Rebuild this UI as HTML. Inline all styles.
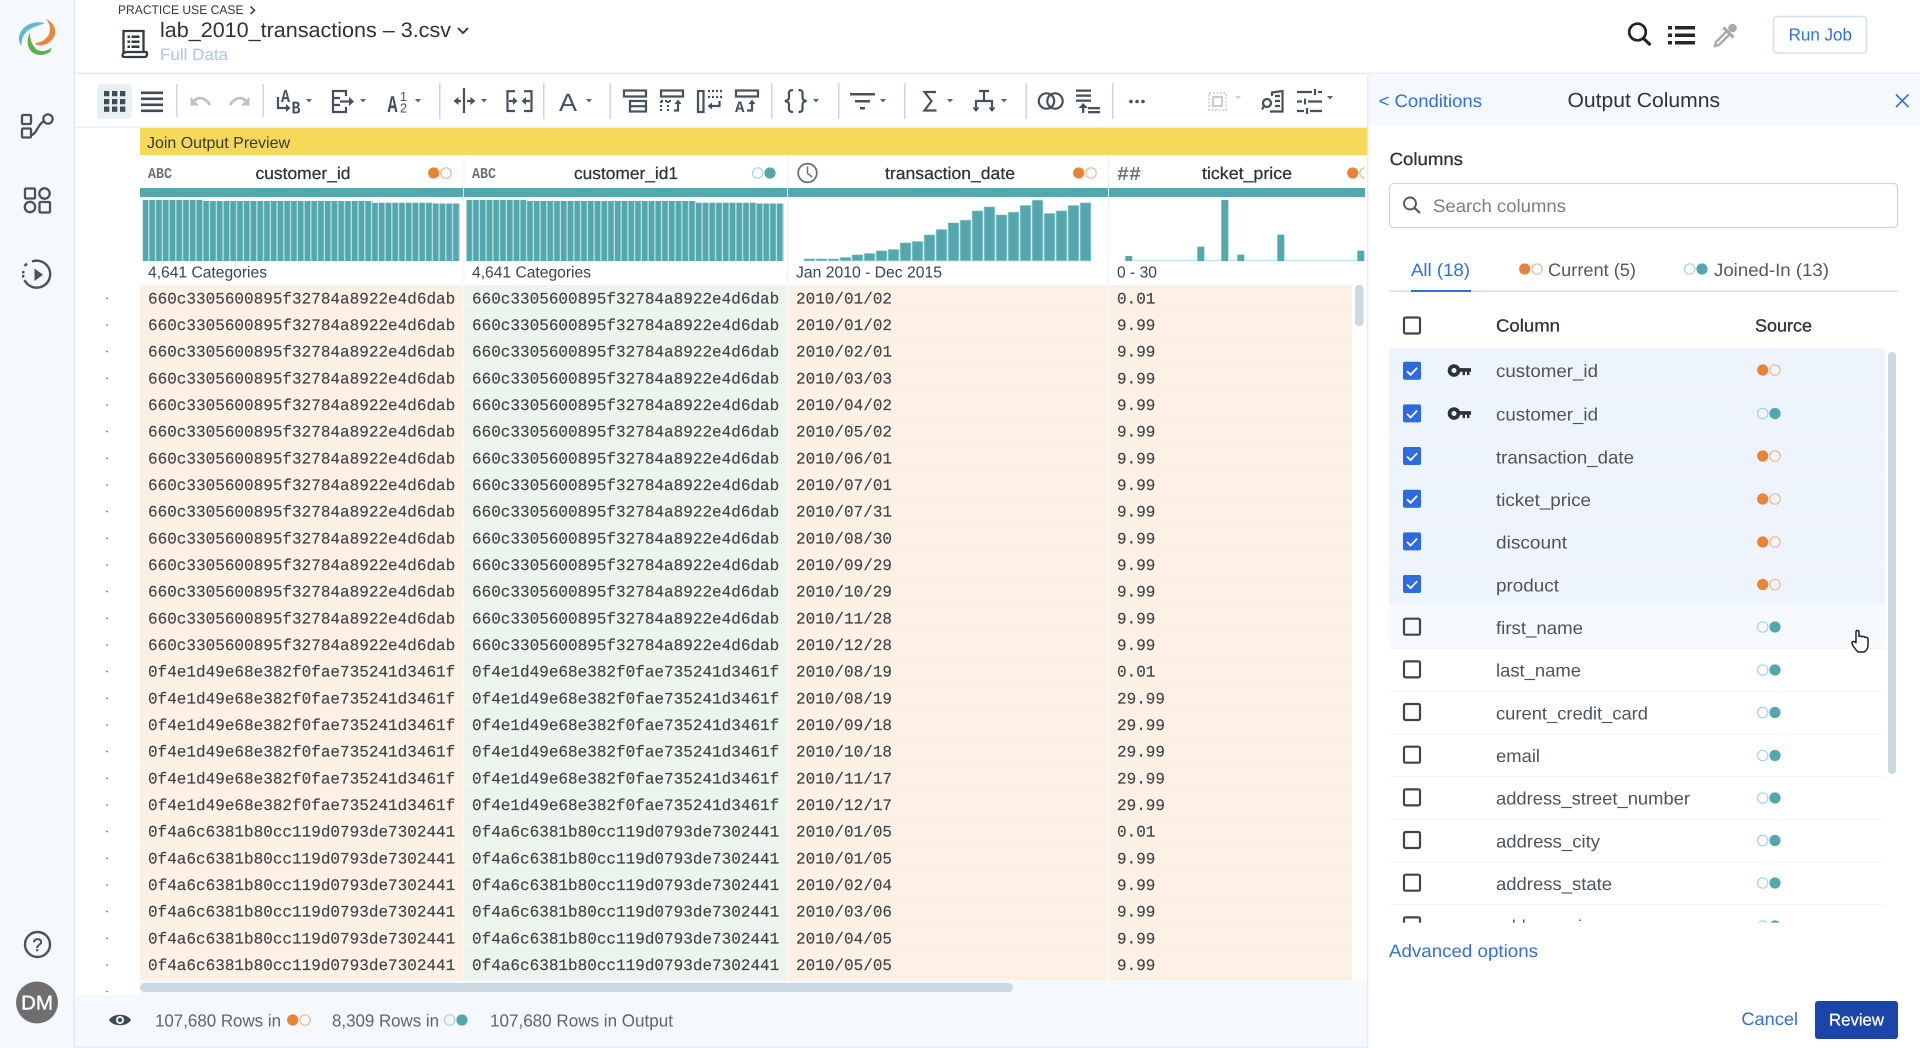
<!DOCTYPE html>
<html lang="en"><head><meta charset="utf-8"><title>Output Columns</title>
<style>
html,body{margin:0;padding:0;background:#fff;width:1920px;height:1048px;overflow:hidden}
svg{display:block;font-family:"Liberation Sans",sans-serif;text-rendering:geometricPrecision}
.m{font-family:"Liberation Mono",monospace;font-size:16px;fill:#3e4347;stroke:#3e4347;stroke-width:.15}
.hd{font-size:17px;fill:#2f3336;stroke:#2f3336;stroke-width:.25}
.rw{font-size:18px;fill:#4d5358}
.bl{fill:#2f6fdf}
.ic{fill:none;stroke:#46525b;stroke-width:2.2}
.fi{fill:#46525b}
.car{fill:#5a646c}
</style></head><body>
<svg xmlns="http://www.w3.org/2000/svg" width="1920" height="1048" viewBox="0 0 1920 1048">
<defs>
<g id="o"><circle cx="5.7" cy="0" r="5.6" fill="#e8843a"/><circle cx="18" cy="0" r="5.2" fill="none" stroke="#f1b690" stroke-width="1.2"/></g>
<g id="t"><circle cx="5.7" cy="0" r="5.2" fill="none" stroke="#a3d5d8" stroke-width="1.2"/><circle cx="18" cy="0" r="5.6" fill="#53a7ad"/></g>
<g id="cb"><rect x="1404" y="-8" width="16" height="16" rx="1.5" fill="none" stroke="#404549" stroke-width="2.2"/></g>
<g id="cc"><rect x="1403" y="-9" width="18" height="18" rx="2" fill="#2c6ae0"/><path d="M1407 0.5l3.6 3.6l6.6-7" fill="none" stroke="#fff" stroke-width="1.8"/></g>
<g id="key"><circle cx="1454" cy="0" r="4.4" fill="none" stroke="#2e3236" stroke-width="3.8"/><path d="M1458 -2.4h13v3.6h-1.600v3.400h-2.400v-3.400h-2v3.400h-2.400v-3.400h-4.600z" fill="#2e3236"/></g>
<pattern id="pb" patternUnits="userSpaceOnUse" x="142.7" y="0" width="6.75" height="100"><rect width="6.75" height="100" fill="#bfe2e4"/><rect width="5.5" height="100" fill="#53a7ad"/></pattern>
<pattern id="po" patternUnits="userSpaceOnUse" x="0" y="285" width="100" height="26.67"><rect width="100" height="26.67" fill="#fdf1e6"/><rect y="26" width="100" height=".67" fill="#f8e8dc"/></pattern>
<pattern id="pg" patternUnits="userSpaceOnUse" x="0" y="285" width="100" height="26.67"><rect width="100" height="26.67" fill="#ebf5ee"/><rect y="26" width="100" height=".67" fill="#deeee4"/></pattern>
<path id="hist" fill="url(#pb)" d="M142.7 261V200H203.45V201H372.2V202.7H433V203.5H460V205V261Z"/>
</defs>

<rect width="1920" height="1048" fill="#fff"/>

<!-- sidebar -->
<rect x="0" y="0" width="73.5" height="1048" fill="#f5f9fe"/>
<rect x="73.5" y="0" width="1.5" height="1048" fill="#dfe9f2"/>
<path d="M45 23C33 20 21 26 19 37C18.6 41 19.5 43.500 21.500 46C21 38 25 31 32 28C36 26 40 25 45 23Z" fill="#5cb8d6"/>
<path d="M46 19C53 22 57 29 54.500 36C52 41 47 45 41 45.500C38 45.500 36 44.500 35 43C41 43 47 39 49 34C51 29 50 24 46 19Z" fill="#e9843c"/>
<path d="M30 33C26 40 27 49 33.500 53C38 56 45 55.500 50 52C51 50 51.500 49 51.500 47.500C46 52 40 52 36 49C32 45 30 40 30 33Z" fill="#5cb14b"/>
<g fill="none" stroke="#48535c" stroke-width="2.300">
<rect x="22" y="115" width="9" height="9" rx="1"/><circle cx="48" cy="119" r="4.600"/><rect x="22" y="128.500" width="9" height="9" rx="1"/><path d="M44 121C38 124 37 133 32 135"/>
<rect x="25" y="188.500" width="10" height="10" rx="1"/><circle cx="44.500" cy="193.500" r="5.200"/><circle cx="30" cy="207" r="5.200"/><rect x="39.500" y="202" width="10.500" height="10.500" rx="1"/>
<path d="M32 261.500A13.500 13.500 0 1 1 24.500 280" stroke-width="2.400"/><path d="M23.500 271A13.500 13.500 0 0 0 23.500 278" stroke-width="2.400" stroke-dasharray="2.500 1.500"/><path d="M27 263.500l-2.500 2.500" stroke-width="2.400"/>
</g>
<path d="M34.500 268.500L43 274.700L34.500 281Z" fill="#48535c"/>
<circle cx="37.500" cy="944.500" r="12.500" fill="none" stroke="#48535c" stroke-width="2.400"/>
<text x="32.500" y="951" font-size="18" fill="#48535c" stroke="#48535c" stroke-width=".5" textLength="10" lengthAdjust="spacingAndGlyphs">?</text>
<circle cx="37" cy="1002.500" r="21" fill="#6e6e6e"/>
<text x="21" y="1009.500" font-size="20" fill="#fff" stroke="#fff" stroke-width=".4" textLength="32" lengthAdjust="spacingAndGlyphs">DM</text>

<!-- top bar -->
<rect x="75" y="72.500" width="1845" height="1.800" fill="#e8edf4"/>
<text x="118" y="14" font-size="12.500" fill="#33383c" textLength="125.500" lengthAdjust="spacingAndGlyphs">PRACTICE USE CASE</text>
<path d="M250.500 6.500l4 3.800l-4 3.800" fill="none" stroke="#33383c" stroke-width="1.500"/>
<g fill="none" stroke="#333b40" stroke-width="2.300"><path d="M123.500 53V31h20v21"/><path d="M123.500 53C121.500 56 122.500 57 124.500 57H144.500C147.500 57 147.500 53 146.500 52H126.500C125.500 52 124.500 53 123.500 53Z"/></g>
<g fill="#333b40"><rect x="127.500" y="35.500" width="2.500" height="2.500"/><rect x="131.500" y="35.500" width="8" height="2.500"/><rect x="127.500" y="40.500" width="2.500" height="2.500"/><rect x="131.500" y="40.500" width="8" height="2.500"/><rect x="127.500" y="45.500" width="2.500" height="2.500"/><rect x="131.500" y="45.500" width="8" height="2.500"/></g>
<text x="160" y="37" font-size="21" fill="#2f3336" textLength="291" lengthAdjust="spacingAndGlyphs">lab_2010_transactions – 3.csv</text>
<path d="M458 28l5 5l5-5" fill="none" stroke="#33383c" stroke-width="1.900"/>
<text x="160" y="60" font-size="16.500" fill="#a9c6ee" textLength="68" lengthAdjust="spacingAndGlyphs">Full Data</text>

<circle cx="1637.500" cy="32" r="8.300" fill="none" stroke="#222" stroke-width="2.700"/><path d="M1643.500 38.500l7 6.500" stroke="#222" stroke-width="3.200"/>
<g fill="#25292c"><rect x="1668" y="26" width="4" height="3.500"/><rect x="1675" y="26" width="20" height="3.500"/><rect x="1668" y="33.500" width="4" height="3.500"/><rect x="1675" y="33.500" width="20" height="3.500"/><rect x="1668" y="41" width="4" height="3.500"/><rect x="1675" y="41" width="20" height="3.500"/></g>
<path d="M1727 31L1716 42L1715 46L1719 45L1730 34" fill="none" stroke="#a8a8a5" stroke-width="2.300"/><path d="M1723.500 27.500l10 10" stroke="#a8a8a5" stroke-width="3.200"/><circle cx="1732.500" cy="28" r="4.300" fill="#a8a8a5"/>
<rect x="1773.500" y="16.500" width="93" height="36.500" rx="3" fill="#fff" stroke="#d5e0ee" stroke-width="1.500"/>
<text x="1788.600" y="40.500" font-size="17.500" class="bl" textLength="63.400" lengthAdjust="spacingAndGlyphs">Run Job</text>

<!-- toolbar -->
<rect x="75" y="126.500" width="1292" height="1.500" fill="#e8edf4"/>
<g fill="#ccd6e0"><rect x="176" y="84" width="1.500" height="33"/><rect x="262.500" y="84" width="1.500" height="33"/><rect x="439" y="83" width="1.500" height="36"/><rect x="543" y="83" width="1.500" height="36"/><rect x="609.500" y="83" width="1.500" height="36"/><rect x="771" y="83" width="1.500" height="36"/><rect x="838" y="83" width="1.500" height="36"/><rect x="904" y="83" width="1.500" height="36"/><rect x="1025.500" y="83" width="1.500" height="36"/><rect x="1112" y="83" width="1.500" height="36"/></g>
<rect x="97" y="84" width="35" height="35" rx="4" fill="#e8f0f1"/>
<g fill="#3f4a52"><rect x="104" y="91" width="5.300" height="5.300"/><rect x="112" y="91" width="5.300" height="5.300"/><rect x="120" y="91" width="5.300" height="5.300"/><rect x="104" y="99" width="5.300" height="5.300"/><rect x="112" y="99" width="5.300" height="5.300"/><rect x="120" y="99" width="5.300" height="5.300"/><rect x="104" y="106.500" width="5.300" height="5.300"/><rect x="112" y="106.500" width="5.300" height="5.300"/><rect x="120" y="106.500" width="5.300" height="5.300"/>
<rect x="141" y="91.500" width="22" height="2.600"/><rect x="141" y="97.500" width="22" height="2.600"/><rect x="141" y="103.500" width="22" height="2.600"/><rect x="141" y="109.500" width="22" height="2.600"/></g>
<!-- undo / redo -->
<g fill="none" stroke="#c2c2be" stroke-width="2.800"><path d="M193 102C198 96 205 97 210 105"/><path d="M247 102C242 96 235 97 230 105"/></g>
<path d="M190.500 96.500V105.500H199ZM249.500 96.500V105.500H241Z" fill="#c2c2be"/>
<!-- AB -->
<text x="281" y="102" font-family="Liberation Mono" font-weight="bold" font-size="18" fill="#46525b" textLength="9" lengthAdjust="spacingAndGlyphs">A</text>
<text x="291.500" y="113.500" font-family="Liberation Mono" font-weight="bold" font-size="18" fill="#46525b" textLength="9" lengthAdjust="spacingAndGlyphs">B</text>
<path d="M278 97V108H287" fill="none" stroke="#46525b" stroke-width="2.200"/><path d="M286 104l4.500 4l-4.500 4z" class="fi"/>
<polygon points="306,99 312,99 309,102.500" class="car"/>
<!-- col export -->
<path d="M346 96V91H333V112H346V107M333 98H340M333 105H340" class="ic"/><path d="M340 101.500H350" class="ic"/><path d="M349 97l5 4.500l-5 4.500z" class="fi"/>
<polygon points="360,99 366,99 363,102.500" class="car"/>
<!-- A 1 2 -->
<text x="387.500" y="112" font-family="Liberation Mono" font-weight="bold" font-size="24" fill="#46525b" textLength="10" lengthAdjust="spacingAndGlyphs">A</text>
<text x="400" y="101" font-size="13" fill="#46525b" textLength="7" lengthAdjust="spacingAndGlyphs">1</text>
<text x="400" y="112.500" font-size="13" fill="#46525b" textLength="7" lengthAdjust="spacingAndGlyphs">2</text>
<polygon points="415,99 421,99 418,102.500" class="car"/>
<!-- split -->
<path d="M464 88V113" class="ic" stroke-width="2.500"/><path d="M457 101H461M467 101H472" class="ic"/><path d="M458.500 97l-5 4l5 4zM470.500 97l5 4l-5 4z" class="fi"/>
<polygon points="481,99 487,99 484,102.500" class="car"/>
<!-- bracket arrows -->
<path d="M515 91.200H507.500V111H515M524 91.200H531.500V111H524" class="ic"/><path d="M509 101H513M526 101H530" class="ic"/><path d="M513 97l4.500 4l-4.500 4zM526 97l-4.500 4l4.500 4z" class="fi"/>
<!-- A -->
<text x="559" y="111" font-size="25" fill="#46525b" textLength="18" lengthAdjust="spacingAndGlyphs">A</text>
<polygon points="586,99 592,99 589,102.500" class="car"/>
<!-- table icons -->
<rect x="624" y="90.500" width="22" height="6" class="ic"/><rect x="630" y="101" width="16" height="10.500" class="ic"/><path d="M630 106.200H646" class="ic"/>
<rect x="661" y="90.500" width="22" height="6" class="ic"/><path d="M661 101V112M668 101V112M661 101H672" class="ic" stroke-dasharray="2 2"/><path d="M674 110.500H678V103" class="ic"/><path d="M674.500 104l3.500-4.500l3.500 4.500z" class="fi"/>
<rect x="698" y="91" width="5.500" height="21" class="ic"/><path d="M708 91H722M708 97H722" class="ic" stroke-dasharray="2 2"/><path d="M719.500 101V106H711" class="ic"/><path d="M712 102.500l-4.500 3.500l4.500 3.500z" class="fi"/>
<rect x="736" y="90.500" width="22" height="6" class="ic"/><text x="735" y="112" font-family="Liberation Mono" font-weight="bold" font-size="16" fill="#46525b" textLength="9.500" lengthAdjust="spacingAndGlyphs">A</text><path d="M747 110.500H752V103" class="ic"/><path d="M748.500 104l3.500-4.500l3.500 4.500z" class="fi"/>
<!-- braces -->
<path d="M793 90C788 90 789 93 789 96C789 99 789 100 785 101C789 102 789 103 789 106C789 109 788 112 793 112M798.500 90C803.500 90 802.500 93 802.500 96C802.500 99 802.500 100 806.500 101C802.500 102 802.500 103 802.500 106C802.500 109 803.500 112 798.500 112" class="ic" stroke-width="2.600"/>
<polygon points="813,99 819,99 816,102.500" class="car"/>
<!-- filter -->
<g class="fi"><rect x="850" y="93" width="25" height="2.500"/><rect x="855" y="100" width="15" height="2.500"/><rect x="860" y="107" width="5" height="2.500"/></g>
<polygon points="880,99 886,99 883,102.500" class="car"/>
<!-- sigma -->
<path d="M936 92H924.500L931.500 101L924.500 110.500H936.500" class="ic" stroke-width="2.600"/>
<polygon points="947,99 953,99 950,102.500" class="car"/>
<!-- flow -->
<path d="M979 91H989M984 91V101M976 109V101H992V109" class="ic" stroke-width="2.400"/><path d="M972.500 107.500h7l-3.500 4.500zM988.500 107.500h7l-3.500 4.500z" class="fi"/>
<polygon points="1001,99 1007,99 1004,102.500" class="car"/>
<!-- rings -->
<circle cx="1046.500" cy="101" r="7.700" class="ic" stroke-width="2.500"/><circle cx="1055" cy="101" r="7.700" class="ic" stroke-width="2.500"/>
<!-- sort -->
<g class="fi"><rect x="1076" y="89.500" width="15" height="2.300"/><rect x="1076" y="94.500" width="15" height="2.300"/><rect x="1076" y="99.500" width="15" height="2.300"/><rect x="1088" y="107" width="12" height="2.300"/><rect x="1088" y="111" width="12" height="2.300"/><rect x="1082" y="106" width="2.300" height="7"/><path d="M1078.500 108l4.700-5l4.700 5z"/></g>
<!-- dots -->
<g class="fi"><circle cx="1131" cy="101.500" r="1.800"/><circle cx="1137" cy="101.500" r="1.800"/><circle cx="1143" cy="101.500" r="1.800"/></g>
<!-- disabled box -->
<rect x="1209" y="93" width="17" height="17" fill="none" stroke="#cfcfcf" stroke-width="1.800" stroke-dasharray="1.800 1.800"/><rect x="1213" y="97" width="9" height="9" fill="none" stroke="#c6c6c6" stroke-width="1.800"/>
<polygon points="1235,96 1241,96 1238,99.500" fill="#cfcfcf"/>
<!-- search doc -->
<path d="M1272 96V92.500L1282.500 91V111.500H1270" class="ic"/><circle cx="1267" cy="103" r="4" class="ic" stroke-width="2"/><path d="M1264 106l-2 3.500" class="ic"/><path d="M1275 96H1280M1275 101H1280M1275 106H1280" class="ic" stroke-width="1.600"/>
<!-- sliders -->
<path d="M1297 92H1312M1318 92H1322M1297 101.500H1302M1308 101.500H1322M1297 111H1304M1310 111H1322" class="ic" stroke-width="2.500"/><path d="M1315 89V95M1305 98.500V104.500M1307 108V114" class="ic" stroke-width="2.500"/>
<polygon points="1327,96 1333,96 1330,99.500" class="car"/>

<!-- grid -->
<rect x="140" y="128" width="1227" height="27" fill="#f6d95b"/>
<text x="147" y="148" font-size="16" fill="#3a3a30" textLength="143" lengthAdjust="spacingAndGlyphs">Join Output Preview</text>

<rect x="463.300" y="155" width="1" height="130" fill="#eef1f4"/>
<rect x="787" y="155" width="1" height="130" fill="#eef1f4"/>
<rect x="1108" y="155" width="1" height="130" fill="#eef1f4"/>
<g font-family="Liberation Mono" font-weight="bold" font-size="15" fill="#6b7379">
<text x="148" y="178" textLength="24" lengthAdjust="spacingAndGlyphs">ABC</text>
<text x="472" y="178" textLength="24" lengthAdjust="spacingAndGlyphs">ABC</text>
<text x="1117" y="180" font-size="20" textLength="24" lengthAdjust="spacingAndGlyphs">##</text>
</g>
<circle cx="807.500" cy="173" r="9.300" fill="none" stroke="#6b7379" stroke-width="1.800"/><path d="M807.500 166.500V173.500L812 177" fill="none" stroke="#6b7379" stroke-width="1.500"/>
<text x="255.500" y="179" class="hd" textLength="95" lengthAdjust="spacingAndGlyphs">customer_id</text>
<text x="574" y="179" class="hd" textLength="104" lengthAdjust="spacingAndGlyphs">customer_id1</text>
<text x="885" y="179" class="hd" textLength="130" lengthAdjust="spacingAndGlyphs">transaction_date</text>
<text x="1202" y="179" class="hd" textLength="90" lengthAdjust="spacingAndGlyphs">ticket_price</text>
<use href="#o" x="428" y="173"/><use href="#t" x="752" y="173"/><use href="#o" x="1073" y="173"/><use href="#o" x="1347" y="173"/>
<rect x="1365" y="155" width="2" height="33" fill="#fff"/>
<g fill="#53a7ad"><rect x="140" y="188" width="323" height="9"/><rect x="464" y="188" width="323" height="9"/><rect x="788" y="188" width="320" height="9"/><rect x="1109" y="188" width="256" height="9"/></g>

<use href="#hist"/>
<use href="#hist" x="323.800"/>
<g fill="#53a7ad" stroke="#c3e4e6" stroke-width=".7">
<rect x="804" y="258.700" width="11" height="2.300"/><rect x="816" y="258.700" width="11" height="2.300"/><rect x="828" y="258.700" width="11" height="2.300"/><rect x="840" y="257.300" width="11" height="3.700"/><rect x="852" y="254.700" width="11" height="6.300"/><rect x="864" y="253.300" width="11" height="7.700"/><rect x="876" y="250.700" width="11" height="10.300"/><rect x="888" y="249.300" width="11" height="11.700"/><rect x="900" y="242.700" width="11" height="18.300"/><rect x="912" y="241.300" width="11" height="19.700"/><rect x="924" y="234.700" width="11" height="26.300"/><rect x="936" y="229.300" width="11" height="31.700"/><rect x="948" y="222.700" width="11" height="38.300"/><rect x="960" y="220" width="11" height="41"/><rect x="972" y="210.700" width="11" height="50.300"/><rect x="984" y="206.700" width="11" height="54.300"/><rect x="996" y="214.700" width="11" height="46.300"/><rect x="1008" y="212" width="11" height="49"/><rect x="1020" y="205.300" width="11" height="55.700"/><rect x="1032" y="200" width="11" height="61"/><rect x="1044" y="213.300" width="11" height="47.700"/><rect x="1056" y="210.700" width="11" height="50.300"/><rect x="1068" y="205.300" width="11" height="55.700"/><rect x="1080" y="202.700" width="11" height="58.300"/>
</g>
<path d="M1125.300 260.500H1365" stroke="#b5e3e3" stroke-width="1" stroke-dasharray="7 1"/>
<g fill="#53a7ad"><rect x="1125.300" y="256" width="7" height="5"/><rect x="1197.300" y="246.700" width="7" height="14.300"/><rect x="1221.300" y="200" width="7" height="61"/><rect x="1237.300" y="254.700" width="7" height="6.300"/><rect x="1277.300" y="234.700" width="7" height="26.300"/><rect x="1357.300" y="250.700" width="7" height="10.300"/></g>

<g font-size="16" fill="#3f4448">
<text x="148" y="277.500" textLength="119" lengthAdjust="spacingAndGlyphs">4,641 Categories</text>
<text x="472" y="277.500" textLength="119" lengthAdjust="spacingAndGlyphs">4,641 Categories</text>
<text x="796" y="277.500" textLength="146" lengthAdjust="spacingAndGlyphs">Jan 2010 - Dec 2015</text>
<text x="1117" y="277.500" textLength="40" lengthAdjust="spacingAndGlyphs">0 - 30</text>
</g>

<rect x="140" y="285" width="323.500" height="698" fill="url(#po)"/>
<rect x="464" y="285" width="323" height="698" fill="url(#pg)"/>
<rect x="788" y="285" width="320" height="698" fill="url(#po)"/>
<rect x="1109" y="285" width="243" height="698" fill="url(#po)"/>
<rect x="1355" y="285" width="8.500" height="41" rx="4" fill="#cbd8e2"/>

<g fill="#555"><circle cx="107" cy="298.300" r=".8"/><circle cx="107" cy="325" r=".8"/><circle cx="107" cy="351.600" r=".8"/><circle cx="107" cy="378.300" r=".8"/><circle cx="107" cy="405" r=".8"/><circle cx="107" cy="431.600" r=".8"/><circle cx="107" cy="458.300" r=".8"/><circle cx="107" cy="485" r=".8"/><circle cx="107" cy="511.600" r=".8"/><circle cx="107" cy="538.300" r=".8"/><circle cx="107" cy="565" r=".8"/><circle cx="107" cy="591.600" r=".8"/><circle cx="107" cy="618.300" r=".8"/><circle cx="107" cy="645" r=".8"/><circle cx="107" cy="671.600" r=".8"/><circle cx="107" cy="698.300" r=".8"/><circle cx="107" cy="725" r=".8"/><circle cx="107" cy="751.600" r=".8"/><circle cx="107" cy="778.300" r=".8"/><circle cx="107" cy="805" r=".8"/><circle cx="107" cy="831.600" r=".8"/><circle cx="107" cy="858.300" r=".8"/><circle cx="107" cy="885" r=".8"/><circle cx="107" cy="911.600" r=".8"/><circle cx="107" cy="938.300" r=".8"/><circle cx="107" cy="965" r=".8"/><circle cx="107" cy="991.500" r=".8"/></g>

<g class="m" transform="translate(0,-.5)">
<text y="303.800"><tspan x="148">660c3305600895f32784a8922e4d6dab</tspan><tspan x="472">660c3305600895f32784a8922e4d6dab</tspan><tspan x="796">2010/01/02</tspan><tspan x="1117">0.01</tspan></text>
<text y="330.500"><tspan x="148">660c3305600895f32784a8922e4d6dab</tspan><tspan x="472">660c3305600895f32784a8922e4d6dab</tspan><tspan x="796">2010/01/02</tspan><tspan x="1117">9.99</tspan></text>
<text y="357.100"><tspan x="148">660c3305600895f32784a8922e4d6dab</tspan><tspan x="472">660c3305600895f32784a8922e4d6dab</tspan><tspan x="796">2010/02/01</tspan><tspan x="1117">9.99</tspan></text>
<text y="383.800"><tspan x="148">660c3305600895f32784a8922e4d6dab</tspan><tspan x="472">660c3305600895f32784a8922e4d6dab</tspan><tspan x="796">2010/03/03</tspan><tspan x="1117">9.99</tspan></text>
<text y="410.500"><tspan x="148">660c3305600895f32784a8922e4d6dab</tspan><tspan x="472">660c3305600895f32784a8922e4d6dab</tspan><tspan x="796">2010/04/02</tspan><tspan x="1117">9.99</tspan></text>
<text y="437.100"><tspan x="148">660c3305600895f32784a8922e4d6dab</tspan><tspan x="472">660c3305600895f32784a8922e4d6dab</tspan><tspan x="796">2010/05/02</tspan><tspan x="1117">9.99</tspan></text>
<text y="463.800"><tspan x="148">660c3305600895f32784a8922e4d6dab</tspan><tspan x="472">660c3305600895f32784a8922e4d6dab</tspan><tspan x="796">2010/06/01</tspan><tspan x="1117">9.99</tspan></text>
<text y="490.500"><tspan x="148">660c3305600895f32784a8922e4d6dab</tspan><tspan x="472">660c3305600895f32784a8922e4d6dab</tspan><tspan x="796">2010/07/01</tspan><tspan x="1117">9.99</tspan></text>
<text y="517.100"><tspan x="148">660c3305600895f32784a8922e4d6dab</tspan><tspan x="472">660c3305600895f32784a8922e4d6dab</tspan><tspan x="796">2010/07/31</tspan><tspan x="1117">9.99</tspan></text>
<text y="543.800"><tspan x="148">660c3305600895f32784a8922e4d6dab</tspan><tspan x="472">660c3305600895f32784a8922e4d6dab</tspan><tspan x="796">2010/08/30</tspan><tspan x="1117">9.99</tspan></text>
<text y="570.500"><tspan x="148">660c3305600895f32784a8922e4d6dab</tspan><tspan x="472">660c3305600895f32784a8922e4d6dab</tspan><tspan x="796">2010/09/29</tspan><tspan x="1117">9.99</tspan></text>
<text y="597.100"><tspan x="148">660c3305600895f32784a8922e4d6dab</tspan><tspan x="472">660c3305600895f32784a8922e4d6dab</tspan><tspan x="796">2010/10/29</tspan><tspan x="1117">9.99</tspan></text>
<text y="623.800"><tspan x="148">660c3305600895f32784a8922e4d6dab</tspan><tspan x="472">660c3305600895f32784a8922e4d6dab</tspan><tspan x="796">2010/11/28</tspan><tspan x="1117">9.99</tspan></text>
<text y="650.500"><tspan x="148">660c3305600895f32784a8922e4d6dab</tspan><tspan x="472">660c3305600895f32784a8922e4d6dab</tspan><tspan x="796">2010/12/28</tspan><tspan x="1117">9.99</tspan></text>
<text y="677.100"><tspan x="148">0f4e1d49e68e382f0fae735241d3461f</tspan><tspan x="472">0f4e1d49e68e382f0fae735241d3461f</tspan><tspan x="796">2010/08/19</tspan><tspan x="1117">0.01</tspan></text>
<text y="703.800"><tspan x="148">0f4e1d49e68e382f0fae735241d3461f</tspan><tspan x="472">0f4e1d49e68e382f0fae735241d3461f</tspan><tspan x="796">2010/08/19</tspan><tspan x="1117">29.99</tspan></text>
<text y="730.500"><tspan x="148">0f4e1d49e68e382f0fae735241d3461f</tspan><tspan x="472">0f4e1d49e68e382f0fae735241d3461f</tspan><tspan x="796">2010/09/18</tspan><tspan x="1117">29.99</tspan></text>
<text y="757.100"><tspan x="148">0f4e1d49e68e382f0fae735241d3461f</tspan><tspan x="472">0f4e1d49e68e382f0fae735241d3461f</tspan><tspan x="796">2010/10/18</tspan><tspan x="1117">29.99</tspan></text>
<text y="783.800"><tspan x="148">0f4e1d49e68e382f0fae735241d3461f</tspan><tspan x="472">0f4e1d49e68e382f0fae735241d3461f</tspan><tspan x="796">2010/11/17</tspan><tspan x="1117">29.99</tspan></text>
<text y="810.500"><tspan x="148">0f4e1d49e68e382f0fae735241d3461f</tspan><tspan x="472">0f4e1d49e68e382f0fae735241d3461f</tspan><tspan x="796">2010/12/17</tspan><tspan x="1117">29.99</tspan></text>
<text y="837.100"><tspan x="148">0f4a6c6381b80cc119d0793de7302441</tspan><tspan x="472">0f4a6c6381b80cc119d0793de7302441</tspan><tspan x="796">2010/01/05</tspan><tspan x="1117">0.01</tspan></text>
<text y="863.800"><tspan x="148">0f4a6c6381b80cc119d0793de7302441</tspan><tspan x="472">0f4a6c6381b80cc119d0793de7302441</tspan><tspan x="796">2010/01/05</tspan><tspan x="1117">9.99</tspan></text>
<text y="890.500"><tspan x="148">0f4a6c6381b80cc119d0793de7302441</tspan><tspan x="472">0f4a6c6381b80cc119d0793de7302441</tspan><tspan x="796">2010/02/04</tspan><tspan x="1117">9.99</tspan></text>
<text y="917.100"><tspan x="148">0f4a6c6381b80cc119d0793de7302441</tspan><tspan x="472">0f4a6c6381b80cc119d0793de7302441</tspan><tspan x="796">2010/03/06</tspan><tspan x="1117">9.99</tspan></text>
<text y="943.800"><tspan x="148">0f4a6c6381b80cc119d0793de7302441</tspan><tspan x="472">0f4a6c6381b80cc119d0793de7302441</tspan><tspan x="796">2010/04/05</tspan><tspan x="1117">9.99</tspan></text>
<text y="970.500"><tspan x="148">0f4a6c6381b80cc119d0793de7302441</tspan><tspan x="472">0f4a6c6381b80cc119d0793de7302441</tspan><tspan x="796">2010/05/05</tspan><tspan x="1117">9.99</tspan></text>
</g>

<!-- horizontal scrollbar + status -->
<rect x="140" y="980.500" width="1227" height="14.500" fill="#f5f9fe"/>
<rect x="140" y="983" width="873" height="9" rx="4.500" fill="#cbd8e2"/>
<rect x="75" y="995" width="1292" height="53" fill="#f5f9fe"/>
<rect x="75" y="1046.500" width="1292" height="1.500" fill="#e8edf4"/>
<path d="M109 1020C113 1013 127 1013 131 1020C127 1027 113 1027 109 1020Z" fill="#3f4a52"/><circle cx="120" cy="1020" r="4" fill="#f5f9fe"/><circle cx="120" cy="1020" r="2.200" fill="#3f4a52"/>
<g font-size="17.500" fill="#5f6468">
<text x="155" y="1026.300" textLength="126" lengthAdjust="spacingAndGlyphs">107,680 Rows in</text>
<text x="332" y="1026.300" textLength="107" lengthAdjust="spacingAndGlyphs">8,309 Rows in</text>
<text x="490" y="1026.300" textLength="183" lengthAdjust="spacingAndGlyphs">107,680 Rows in Output</text>
</g>
<use href="#o" x="287" y="1020"/><use href="#t" x="444" y="1020"/>

<!-- right panel -->
<rect x="1367" y="74" width="553" height="974" fill="#fff"/>
<rect x="1367" y="74" width="1.500" height="974" fill="#e6ecf4"/>
<rect x="1368.500" y="74" width="551.500" height="51" fill="#f5f9fe"/>
<text x="1378.600" y="107" font-size="18" class="bl" textLength="103.400" lengthAdjust="spacingAndGlyphs">&lt; Conditions</text>
<text x="1567.500" y="107" font-size="20.500" fill="#2f3336" textLength="152.500" lengthAdjust="spacingAndGlyphs">Output Columns</text>
<path d="M1896 94.500l12.500 12.500M1908.500 94.500l-12.500 12.500" stroke="#2f6fdf" stroke-width="1.600" fill="none"/>
<text x="1389.600" y="165" font-size="17.500" fill="#2e3236" stroke="#2e3236" stroke-width=".3" textLength="73.400" lengthAdjust="spacingAndGlyphs">Columns</text>
<rect x="1389.500" y="183.500" width="508" height="44" rx="4" fill="#fff" stroke="#ccd6e4" stroke-width="1.300"/>
<circle cx="1410" cy="203.500" r="6" fill="none" stroke="#555b60" stroke-width="1.900"/><path d="M1414.500 208l5.500 5" stroke="#555b60" stroke-width="2.200"/>
<text x="1433" y="212" font-size="18" fill="#7a7f85" textLength="133" lengthAdjust="spacingAndGlyphs">Search columns</text>
<text x="1411" y="276" font-size="18" class="bl" textLength="59" lengthAdjust="spacingAndGlyphs">All (18)</text>
<use href="#o" x="1519" y="269"/>
<text x="1548" y="276" font-size="18" fill="#54595e" textLength="88" lengthAdjust="spacingAndGlyphs">Current (5)</text>
<use href="#t" x="1684" y="269"/>
<text x="1714" y="276" font-size="18" fill="#54595e" textLength="115" lengthAdjust="spacingAndGlyphs">Joined-In (13)</text>
<rect x="1389" y="290.500" width="509" height="1.300" fill="#cfd8e3"/>
<rect x="1411" y="290" width="60" height="2" fill="#2f6fdf"/>

<use href="#cb" y="325.500"/>
<text x="1496" y="331.500" font-size="17.500" fill="#2e3236" stroke="#2e3236" stroke-width=".3" textLength="64" lengthAdjust="spacingAndGlyphs">Column</text>
<text x="1755" y="331.500" font-size="17.500" fill="#2e3236" stroke="#2e3236" stroke-width=".3" textLength="57" lengthAdjust="spacingAndGlyphs">Source</text>

<rect x="1389" y="348.300" width="496" height="256.500" fill="#edf4fc"/>
<rect x="1389" y="604.800" width="496" height="42.700" fill="#f6faff"/>
<g fill="#f5f9fe"><rect x="1389" y="392" width="496" height="1"/><rect x="1389" y="434.700" width="496" height="1"/><rect x="1389" y="477.300" width="496" height="1"/><rect x="1389" y="520" width="496" height="1"/><rect x="1389" y="562.700" width="496" height="1"/></g>
<g fill="#f1f5f9"><rect x="1389" y="648" width="496" height="1"/><rect x="1389" y="690.700" width="496" height="1"/><rect x="1389" y="733.400" width="496" height="1"/><rect x="1389" y="776" width="496" height="1"/><rect x="1389" y="818.800" width="496" height="1"/><rect x="1389" y="861.400" width="496" height="1"/><rect x="1389" y="904" width="496" height="1"/></g>
<rect x="1888" y="352" width="8" height="422" rx="4" fill="#cbd8e2"/>

<use href="#cc" y="370.700"/><use href="#cc" y="413.400"/><use href="#cc" y="456"/><use href="#cc" y="498.700"/><use href="#cc" y="541.400"/><use href="#cc" y="584"/>
<use href="#cb" y="626.700"/><use href="#cb" y="669.400"/><use href="#cb" y="712"/><use href="#cb" y="754.700"/><use href="#cb" y="797.400"/><use href="#cb" y="840"/><use href="#cb" y="882.700"/><use href="#cb" y="925.400"/>
<use href="#key" y="370.500"/><use href="#key" y="413.500"/>

<text x="1496" y="377" class="rw" textLength="102" lengthAdjust="spacingAndGlyphs">customer_id</text>
<text x="1496" y="420.600" class="rw" textLength="102" lengthAdjust="spacingAndGlyphs">customer_id</text>
<text x="1496" y="463.300" class="rw" textLength="138" lengthAdjust="spacingAndGlyphs">transaction_date</text>
<text x="1496" y="506" class="rw" textLength="95" lengthAdjust="spacingAndGlyphs">ticket_price</text>
<text x="1496" y="548.600" class="rw" textLength="71" lengthAdjust="spacingAndGlyphs">discount</text>
<text x="1496" y="591.300" class="rw" textLength="63" lengthAdjust="spacingAndGlyphs">product</text>
<text x="1496" y="634" class="rw" textLength="87" lengthAdjust="spacingAndGlyphs">first_name</text>
<text x="1496" y="676.600" class="rw" textLength="85" lengthAdjust="spacingAndGlyphs">last_name</text>
<text x="1496" y="719.300" class="rw" textLength="152" lengthAdjust="spacingAndGlyphs">curent_credit_card</text>
<text x="1496" y="762" class="rw" textLength="44" lengthAdjust="spacingAndGlyphs">email</text>
<text x="1496" y="804.600" class="rw" textLength="194" lengthAdjust="spacingAndGlyphs">address_street_number</text>
<text x="1496" y="847.300" class="rw" textLength="104" lengthAdjust="spacingAndGlyphs">address_city</text>
<text x="1496" y="890" class="rw" textLength="116" lengthAdjust="spacingAndGlyphs">address_state</text>
<text x="1496" y="932.600" class="rw" textLength="96" lengthAdjust="spacingAndGlyphs">address_zip</text>

<use href="#o" x="1757" y="370"/><use href="#t" x="1757" y="413.500"/><use href="#o" x="1757" y="456"/><use href="#o" x="1757" y="499"/><use href="#o" x="1757" y="542"/><use href="#o" x="1757" y="584.500"/><use href="#t" x="1757" y="627"/><use href="#t" x="1757" y="670"/><use href="#t" x="1757" y="712.500"/><use href="#t" x="1757" y="755.500"/><use href="#t" x="1757" y="798"/><use href="#t" x="1757" y="840.500"/><use href="#t" x="1757" y="883"/><use href="#t" x="1757" y="926"/>
<rect x="1389" y="922.600" width="509" height="60" fill="#fff"/>

<!-- hand cursor -->
<path d="M1856 640V632C1856 630 1859 630 1859 632V637C1859 635.500 1862 635.500 1862 637.500C1862 636 1865 636 1865 638C1865 637 1868 637 1868 639V645C1868 649 1866 651 1864 652H1858C1856 650 1852 645 1852 643C1852 641 1855 641 1856 643Z" fill="#fff" stroke="#222" stroke-width="1.500"/>

<text x="1389" y="957" font-size="18" class="bl" textLength="149" lengthAdjust="spacingAndGlyphs">Advanced options</text>
<text x="1741.400" y="1025" font-size="18" class="bl" textLength="56.600" lengthAdjust="spacingAndGlyphs">Cancel</text>
<rect x="1815" y="1001" width="83" height="38" rx="3" fill="#1b45a8"/>
<text x="1829" y="1025.500" font-size="17" fill="#fff" stroke="#fff" stroke-width=".25" textLength="55" lengthAdjust="spacingAndGlyphs">Review</text>
</svg>
</body></html>
